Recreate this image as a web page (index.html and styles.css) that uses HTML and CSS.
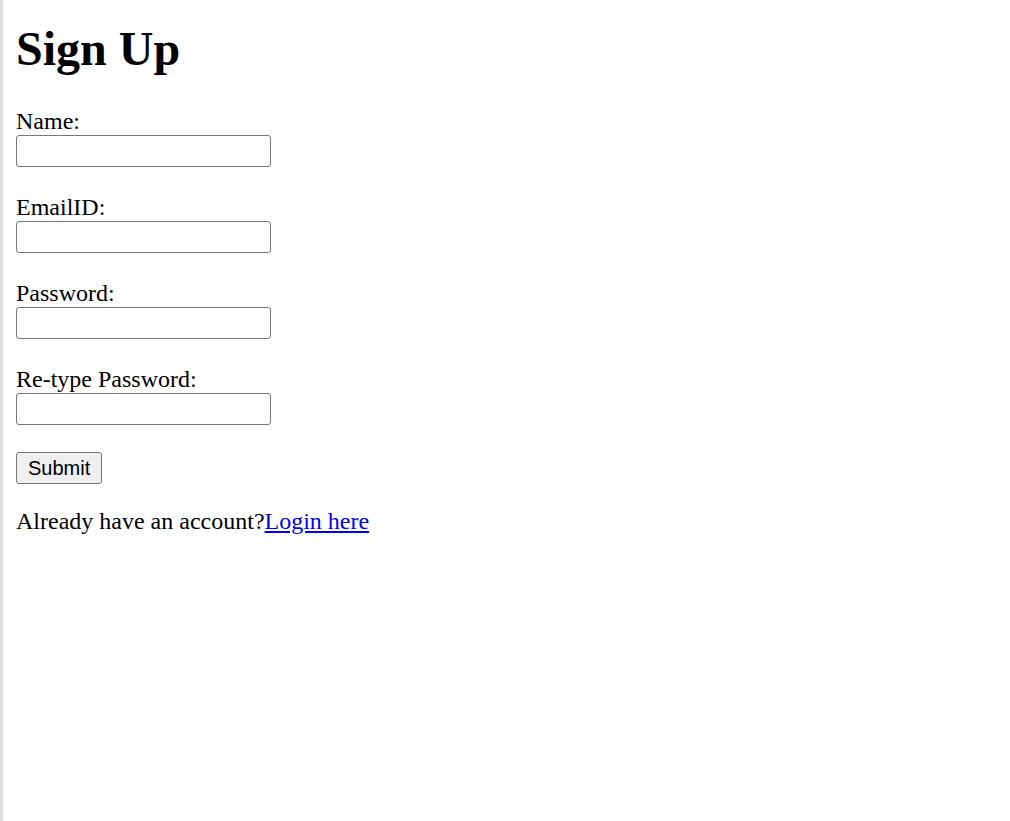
FILE: index.html
```html
<!DOCTYPE html>
<html>
<head>
<meta charset="utf-8">
<title>Sign Up</title>
<link rel="stylesheet" href="styles.css">
</head>
<body>
<div class="page">
  <h1 class="title">Sign Up</h1>
  <form class="signup">
    <label class="lbl" for="name">Name:</label><br>
    <input class="field" type="text" id="name"><br><br>
    <label class="lbl" for="email">EmailID:</label><br>
    <input class="field" type="email" id="email"><br><br>
    <label class="lbl" for="pw">Password:</label><br>
    <input class="field" type="password" id="pw"><br><br>
    <label class="lbl" for="pw2">Re-type Password:</label><br>
    <input class="field" type="password" id="pw2"><br><br>
    <button class="submit" type="submit">Submit</button>
  </form>
  <p class="login">Already have an account?<a class="login-link" href="#">Login here</a></p>
</div>
</body>
</html>
```
FILE: styles.css
```css
html, body {
  margin: 0;
  padding: 0;
  background: #fff;
}
.page {
  border-left: 3px solid #dedede;
  min-height: 821px;
  box-sizing: border-box;
  padding: 1px 12px 0 13px;
  font-family: "Liberation Serif", "Times New Roman", serif;
  font-size: 24px;
  color: #000;
}
.title {
  font-size: 48px;
  font-weight: bold;
  margin: 20px 0 32px;
}
.signup {
  margin: 0;
}
.field {
  box-sizing: border-box;
  width: 255px;
  height: 32px;
  border: 1px solid #767676;
  border-radius: 3px;
  padding: 1px 3px;
  margin: 0;
  font-size: 20px;
  font-family: "Liberation Sans", Arial, sans-serif;
  vertical-align: baseline;
}
.submit {
  box-sizing: border-box;
  height: 32px;
  padding: 1px 11px;
  border: 1px solid #767676;
  border-radius: 3px;
  background: #efefef;
  font-family: "Liberation Sans", Arial, sans-serif;
  font-size: 20px;
  color: #000;
  margin: 0;
}
.login {
  margin: 24px 0;
}
.login-link {
  color: #0000ee;
  text-decoration: underline;
}
```
